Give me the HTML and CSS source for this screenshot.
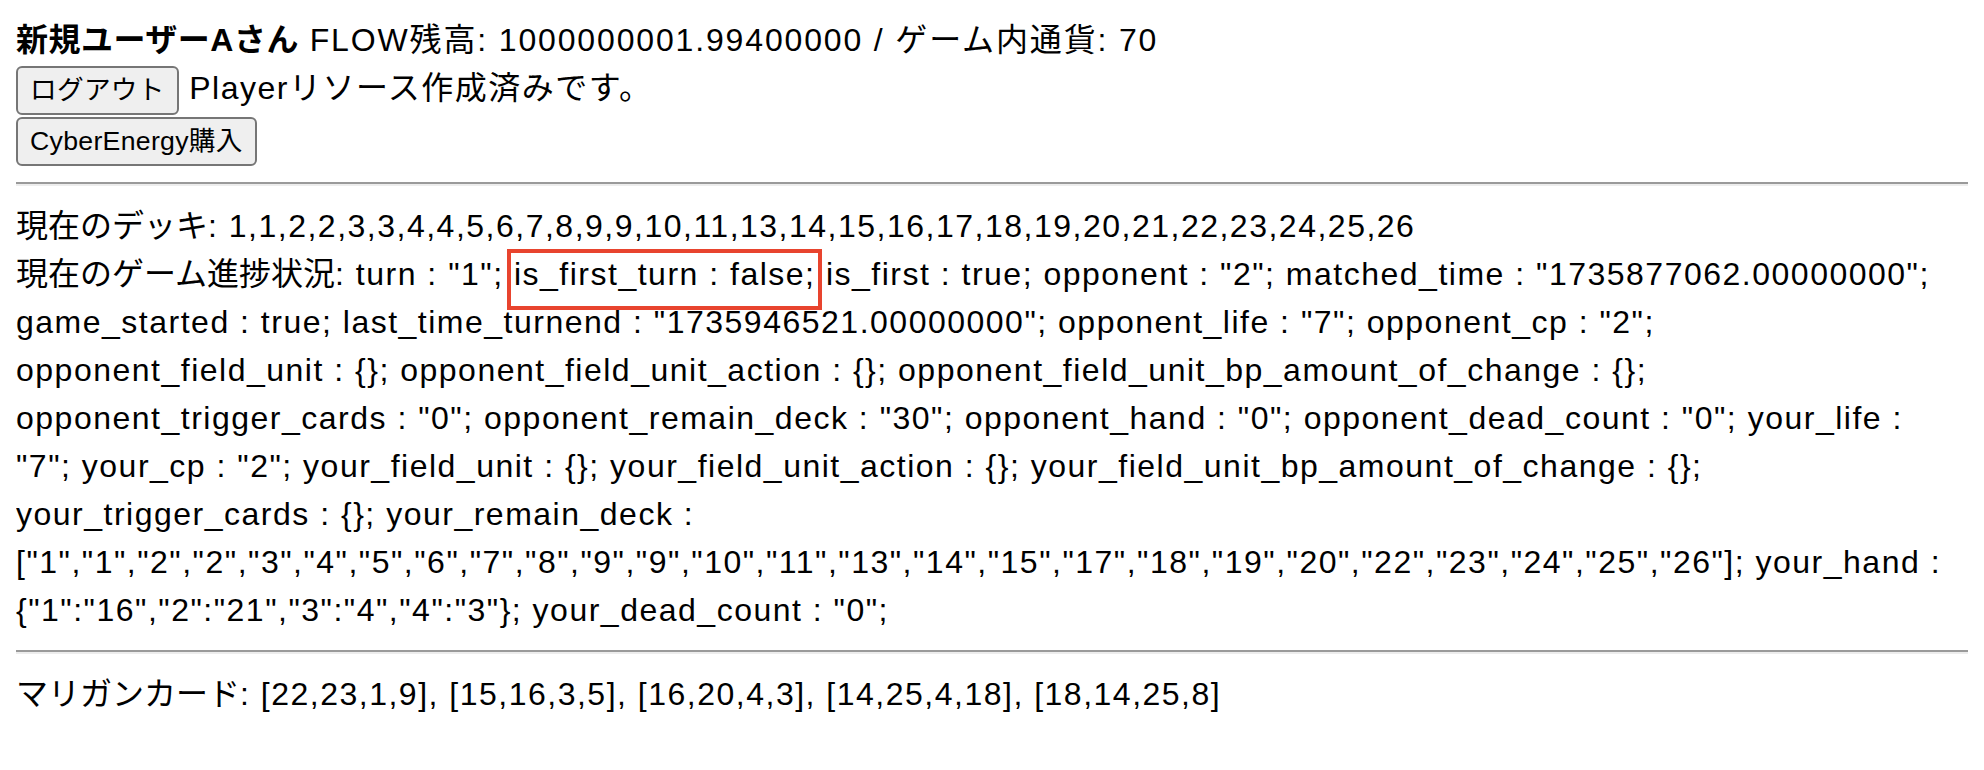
FILE: index.html
```html
<!DOCTYPE html>
<html lang="ja">
<head>
<meta charset="utf-8">
<title>Game Status</title>
<link rel="stylesheet" href="styles.css">
</head>
<body>
<div class="account">
  <div class="row balance"><b class="user">新規ユーザーAさん</b> FLOW残高: 1000000001.99400000 / ゲーム内通貨: 70</div>
  <div class="row"><button class="btn" type="button">ログアウト</button> Playerリソース作成済みです。</div>
  <div class="row"><button class="btn" type="button">CyberEnergy購入</button></div>
</div>
<hr class="rule">
<div class="status">
  <div class="row"><span class="label">現在のデッキ</span>: 1,1,2,2,3,3,4,4,5,6,7,8,9,9,10,11,13,14,15,16,17,18,19,20,21,22,23,24,25,26</div>
  <div class="row"><span class="label">現在のゲーム進捗状況</span>: turn : "1"; <span class="mark">is_first_turn : false;</span> is_first : true; opponent : "2"; matched_time : "1735877062.00000000"; game_started : true; last_time_turnend : "1735946521.00000000"; opponent_life : "7"; opponent_cp : "2"; opponent_field_unit : {}; opponent_field_unit_action : {}; opponent_field_unit_bp_amount_of_change : {}; opponent_trigger_cards : "0"; opponent_remain_deck : "30"; opponent_hand : "0"; opponent_dead_count : "0"; your_life : "7"; your_cp : "2"; your_field_unit : {}; your_field_unit_action : {}; your_field_unit_bp_amount_of_change : {}; your_trigger_cards : {}; your_remain_deck : ["1","1","2","2","3","4","5","6","7","8","9","9","10","11","13","14","15","17","18","19","20","22","23","24","25","26"]; your_hand : {"1":"16","2":"21","3":"4","4":"3"}; your_dead_count : "0";</div>
</div>
<hr class="rule">
<div class="mulligan">
  <div class="row"><span class="label">マリガンカード</span>: [22,23,1,9], [15,16,3,5], [16,20,4,3], [14,25,4,18], [18,14,25,8]</div>
</div>
</body>
</html>
```

FILE: styles.css
```css
html, body {
  background: #ffffff;
}

body {
  margin: 16px;
  color: #000000;
  font-family: "Liberation Sans", "Noto Sans CJK JP", sans-serif;
  font-size: 32px;
  line-height: 48px;
  letter-spacing: 1.5px;
}

.balance {
  letter-spacing: 1.85px;
}

.user {
  font-weight: bold;
  letter-spacing: 0.5px;
}

.label {
  letter-spacing: 0;
}

.btn {
  font-family: "Liberation Sans", "Noto Sans CJK JP", sans-serif;
  font-size: 26.67px;
  line-height: 41px;
  letter-spacing: 0.3px;
  color: #000000;
  background: #efefef;
  border: 2px solid #767676;
  border-radius: 6px;
  padding: 2px 12px;
  margin: 0;
}

.rule {
  height: 0;
  margin: 16px 0;
  border: none;
  border-top: 2px solid #9a9a9a;
  border-bottom: 2px solid #ededed;
}

.mark {
  padding-bottom: 11px;
  outline: 4px solid #e8442e;
  outline-offset: 3px;
}
```
